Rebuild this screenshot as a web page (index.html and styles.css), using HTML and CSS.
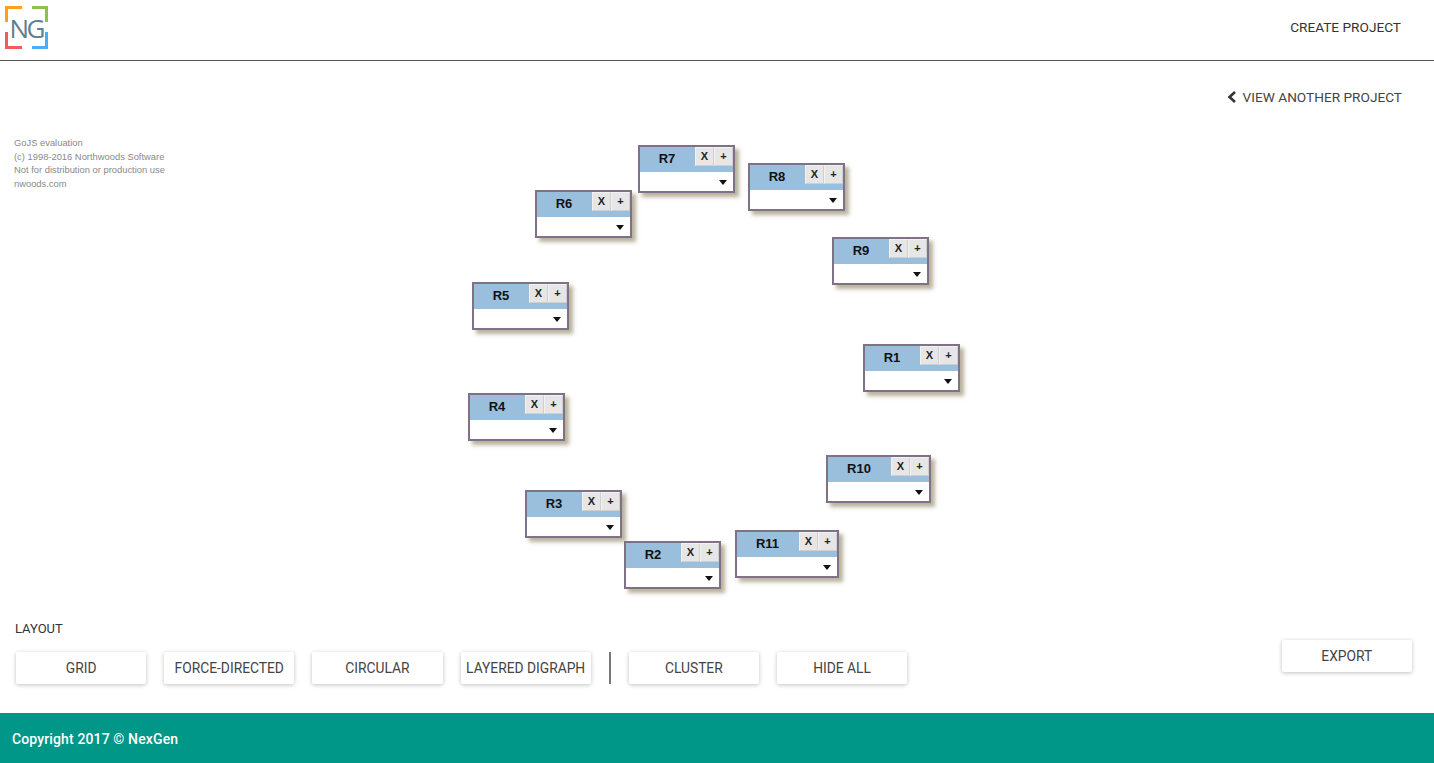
FILE: index.html
```html
<!DOCTYPE html>
<html lang="en">
<head>
  <meta charset="UTF-8">
  <title>NexGen Project</title>
  <link rel="stylesheet" href="styles.css">
</head>
<body>
  <div class="page">
    <header class="topbar">
      <svg class="logo" width="50" height="50" viewBox="0 0 50 50">
        <path d="M6.500 22V7.500H22" class="corner" stroke="#ff9f1c"/>
        <path d="M32 7.500H46.500V22" class="corner" stroke="#8bc34a"/>
        <path d="M6.500 32V47.500H22" class="corner" stroke="#f55a5a"/>
        <path d="M32 47.500H46.500V32" class="corner" stroke="#4dabf7"/>
        <text x="9.500" y="38" class="logo-text">NG</text>
      </svg>
      <a class="nav-link">CREATE PROJECT</a>
    </header>

    <main class="content">
      <div class="subnav">
        <svg width="10" height="12" viewBox="0 0 10 12"><path d="M8 1L2.500 6L8 11" fill="none" stroke="#333" stroke-width="2.600"/></svg>
        <span>VIEW ANOTHER PROJECT</span>
      </div>

      <div class="diagram">
        <div class="watermark">
          <div>GoJS evaluation</div>
          <div>(c) 1998-2016 Northwoods Software</div>
          <div>Not for distribution or production use</div>
          <div>nwoods.com</div>
        </div>

        <div class="node node-r7">
          <div class="node-head"><span class="node-title">R7</span><span class="node-btn">X</span><span class="node-btn">+</span></div>
          <div class="node-body"><span class="caret"></span></div>
        </div>
        <div class="node node-r8">
          <div class="node-head"><span class="node-title">R8</span><span class="node-btn">X</span><span class="node-btn">+</span></div>
          <div class="node-body"><span class="caret"></span></div>
        </div>
        <div class="node node-r6">
          <div class="node-head"><span class="node-title">R6</span><span class="node-btn">X</span><span class="node-btn">+</span></div>
          <div class="node-body"><span class="caret"></span></div>
        </div>
        <div class="node node-r9">
          <div class="node-head"><span class="node-title">R9</span><span class="node-btn">X</span><span class="node-btn">+</span></div>
          <div class="node-body"><span class="caret"></span></div>
        </div>
        <div class="node node-r5">
          <div class="node-head"><span class="node-title">R5</span><span class="node-btn">X</span><span class="node-btn">+</span></div>
          <div class="node-body"><span class="caret"></span></div>
        </div>
        <div class="node node-r1">
          <div class="node-head"><span class="node-title">R1</span><span class="node-btn">X</span><span class="node-btn">+</span></div>
          <div class="node-body"><span class="caret"></span></div>
        </div>
        <div class="node node-r4">
          <div class="node-head"><span class="node-title">R4</span><span class="node-btn">X</span><span class="node-btn">+</span></div>
          <div class="node-body"><span class="caret"></span></div>
        </div>
        <div class="node node-r10">
          <div class="node-head"><span class="node-title">R10</span><span class="node-btn">X</span><span class="node-btn">+</span></div>
          <div class="node-body"><span class="caret"></span></div>
        </div>
        <div class="node node-r3">
          <div class="node-head"><span class="node-title">R3</span><span class="node-btn">X</span><span class="node-btn">+</span></div>
          <div class="node-body"><span class="caret"></span></div>
        </div>
        <div class="node node-r2">
          <div class="node-head"><span class="node-title">R2</span><span class="node-btn">X</span><span class="node-btn">+</span></div>
          <div class="node-body"><span class="caret"></span></div>
        </div>
        <div class="node node-r11">
          <div class="node-head"><span class="node-title">R11</span><span class="node-btn">X</span><span class="node-btn">+</span></div>
          <div class="node-body"><span class="caret"></span></div>
        </div>
      </div>

      <div class="toolbar">
        <div class="layout-group">
          <div class="layout-label">LAYOUT</div>
          <div class="layout-buttons">
            <button class="btn">GRID</button>
            <button class="btn">FORCE-DIRECTED</button>
            <button class="btn">CIRCULAR</button>
            <button class="btn">LAYERED DIGRAPH</button>
            <span class="divider"></span>
            <button class="btn">CLUSTER</button>
            <button class="btn">HIDE ALL</button>
          </div>
        </div>
        <button class="btn export">EXPORT</button>
      </div>
    </main>

    <footer class="footer">Copyright 2017 © NexGen</footer>
  </div>
</body>
</html>
```

FILE: styles.css
```css
body {
  margin: 0;
  font-family: Roboto, "Liberation Sans", sans-serif;
  color: #333;
  background: #fff;
}
.page {
  display: flex;
  flex-direction: column;
  height: 763px;
  overflow: hidden;
}
.topbar {
  display: flex;
  align-items: center;
  justify-content: space-between;
  height: 60px;
  flex: none;
  padding: 0 33px 0 0;
  border-bottom: 1px solid #555;
  box-sizing: content-box;
}
.logo {
  display: block;
  margin-bottom: 10px;
}
.corner {
  fill: none;
  stroke-width: 3;
}
.logo-text {
  font-family: "Open Sans", sans-serif;
  font-size: 26px;
  fill: #5f7f92;
  letter-spacing: -2.500px;
}
.nav-link {
  font-size: 13.650px;
  line-height: 20px;
  margin-bottom: 6px;
  color: #333;
}
.content {
  flex: 1;
  display: flex;
  flex-direction: column;
  min-height: 0;
}
.subnav {
  display: flex;
  align-items: center;
  justify-content: flex-end;
  gap: 6px;
  height: 20px;
  margin-top: 26px;
  padding-right: 32px;
  font-size: 13.650px;
  color: #444;
}
.diagram {
  position: relative;
  flex: 1;
}
.watermark {
  position: absolute;
  left: 14px;
  top: 30px;
  font-family: "Liberation Sans", sans-serif;
  font-size: 9.370px;
  line-height: 13.500px;
  color: #8a8a8a;
  white-space: nowrap;
}
.node {
  position: absolute;
  box-sizing: border-box;
  width: 97px;
  height: 48px;
  border: 2px solid #7f7287;
  background: #fff;
  box-shadow: 4px 4px 4px rgba(125, 115, 75, 0.55);
  font-family: "Liberation Sans", sans-serif;
}
.node-r7 { left: 638px; top: 38px; }
.node-r8 { left: 748px; top: 56px; }
.node-r6 { left: 535px; top: 83px; }
.node-r9 { left: 832px; top: 130px; }
.node-r5 { left: 472px; top: 175px; }
.node-r1 { left: 863px; top: 237px; }
.node-r4 { left: 468px; top: 286px; }
.node-r10 { left: 826px; top: 348px; width: 105px; }
.node-r3 { left: 525px; top: 383px; }
.node-r2 { left: 624px; top: 434px; }
.node-r11 { left: 735px; top: 423px; width: 104px; }
.node-head {
  display: flex;
  height: 25px;
  background: #99bfdc;
}
.node-title {
  flex: 1;
  padding-right: 1px;
  text-align: center;
  font-size: 13px;
  font-weight: bold;
  line-height: 24px;
  color: #111;
}
.node-btn {
  width: 19px;
  height: 19px;
  box-sizing: border-box;
  background: #e6e6e6;
  border: 1px solid #cfcfcf;
  border-left-color: #f2f2f2;
  border-top-color: #f2f2f2;
  font-size: 11px;
  font-weight: bold;
  line-height: 16px;
  text-align: center;
  color: #222;
}
.node-body {
  display: flex;
  justify-content: flex-end;
  align-items: center;
  height: 19px;
  padding-right: 6px;
}
.caret {
  width: 0;
  height: 0;
  margin-top: 1px;
  border-left: 4px solid transparent;
  border-right: 4px solid transparent;
  border-top: 5px solid #111;
}
.toolbar {
  display: flex;
  justify-content: space-between;
  align-items: flex-start;
  height: 98px;
  flex: none;
  padding: 0 22px 0 16px;
}
.layout-label {
  font-size: 13px;
  line-height: 16px;
  margin-top: 6px;
  margin-left: -1px;
  color: #333;
}
.layout-buttons {
  display: flex;
  align-items: center;
  gap: 18px;
  margin-top: 15px;
}
.btn {
  width: 130.200px;
  height: 32px;
  padding: 0 0 1px;
  border: none;
  border-radius: 2px;
  background: #fff;
  box-shadow: 0 1px 4px rgba(0, 0, 0, 0.25);
  font-family: Roboto, sans-serif;
  font-size: 13.800px;
  color: #444;
}
.export {
  width: 130.500px;
  margin-top: 25px;
}
.divider {
  width: 2px;
  height: 32px;
  background: #777;
}
.footer {
  flex: none;
  height: 50px;
  padding-left: 12px;
  background: #009688;
  color: #fff;
  font-size: 14px;
  font-weight: 500;
  letter-spacing: 0.130px;
  line-height: 52px;
}
```
